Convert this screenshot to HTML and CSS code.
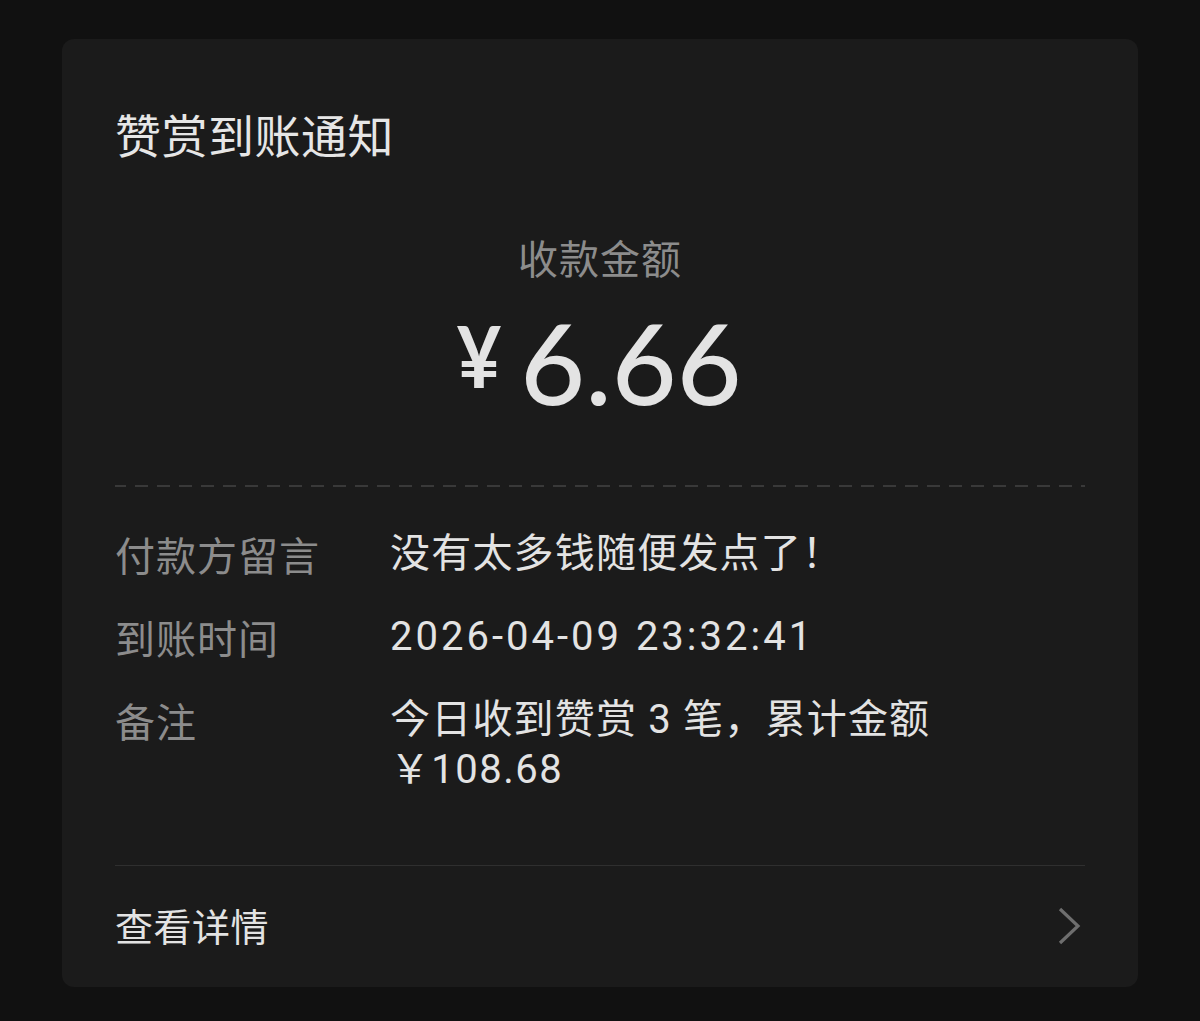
FILE: index.html
```html
<!DOCTYPE html>
<html lang="zh-CN">
<head>
<meta charset="utf-8">
<title>赞赏到账通知</title>
<link rel="stylesheet" href="styles.css">
</head>
<body>
<div class="card">
  <div class="title">赞赏到账通知</div>
  <div class="sub">收款金额</div>
  <div class="amount"><span class="yen">¥</span><span class="num">6.66</span></div>
  <div class="dash"></div>
  <div class="rows">
    <div class="row">
      <div class="label">付款方留言</div>
      <div class="value">没有太多钱随便发点了！</div>
    </div>
    <div class="row">
      <div class="label">到账时间</div>
      <div class="value time">2026-04-09 23:32:41</div>
    </div>
    <div class="row">
      <div class="label">备注</div>
      <div class="value">今日收到赞赏 3 笔，累计金额<br>￥<span class="digits">108.68</span></div>
    </div>
  </div>
  <div class="line"></div>
  <div class="footer">
    <span class="more">查看详情</span>
    <svg class="chev" width="24" height="40" viewBox="0 0 24 40"><path d="M3 2 L21 19 L3 36" fill="none" stroke="#6e6e6e" stroke-width="3.2" stroke-linecap="butt" stroke-linejoin="miter"/></svg>
  </div>
</div>
</body>
</html>
```
FILE: styles.css
```css
html, body {
  margin: 0;
  padding: 0;
  background: #111111;
}
body {
  width: 1200px;
  height: 1021px;
  overflow: hidden;
  font-family: "Noto Sans CJK SC", sans-serif;
}
.card {
  margin: 39px 62px 0;
  background: #1b1b1b;
  border-radius: 12px;
  padding: 64px 53px 32px;
  height: 948px;
  box-sizing: border-box;
}
.title {
  font-size: 46px;
  line-height: 60px;
  color: #e6e6e6;
  letter-spacing: 0.5px;
}
.sub {
  margin-top: 69px;
  font-size: 40px;
  line-height: 50px;
  color: #8c8c8c;
  text-align: center;
  letter-spacing: 1px;
}
.amount {
  margin-top: 20px;
  height: 120px;
  display: flex;
  justify-content: center;
  align-items: flex-start;
  color: #e3e3e3;
  font-family: "Lato", sans-serif;
  padding-right: 4px;
}
.yen {
  font-size: 86px;
  font-weight: 700;
  line-height: 86px;
  margin-top: 10px;
  margin-right: 16px;
  transform: scaleX(0.9);
}
.num {
  font-size: 112px;
  line-height: 120px;
  font-weight: 500;
}
.dash {
  margin-top: 63px;
  height: 2px;
  background: repeating-linear-gradient(to right, #393939 0 13px, transparent 13px 22px);
  background-position: -2px 0;
}
.rows {
  margin-top: 42px;
  display: flex;
  flex-direction: column;
  gap: 33px;
}
.row {
  display: grid;
  grid-template-columns: 275px 1fr;
  font-size: 40px;
  line-height: 50px;
}
.label {
  color: #8c8c8c;
  letter-spacing: 1px;
}
.value {
  color: #e3e3e3;
  font-family: "Roboto", "Noto Sans CJK SC", sans-serif;
  letter-spacing: 1.2px;
}
.value.time {
  letter-spacing: 3px;
  word-spacing: 1px;
}
.digits {
  letter-spacing: 1.5px;
}
.line {
  margin-top: 70px;
  height: 1px;
  background: #2f2f2f;
}
.footer {
  margin-top: 29px;
  display: flex;
  justify-content: space-between;
  align-items: center;
  height: 60px;
}
.more {
  font-size: 38px;
  line-height: 60px;
  color: #e3e3e3;
  letter-spacing: 0.5px;
}
.chev {
  margin-right: 4px;
  margin-top: 4px;
}
```
